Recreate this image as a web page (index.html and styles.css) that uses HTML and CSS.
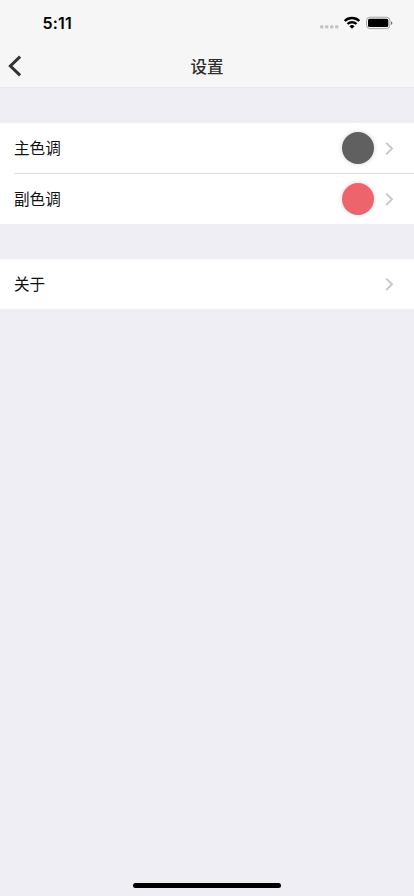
FILE: index.html
```html
<!DOCTYPE html>
<html lang="zh-CN">
<head>
<meta charset="utf-8">
<meta name="viewport" content="width=device-width, initial-scale=1">
<title>设置</title>
<link rel="stylesheet" href="styles.css">
</head>
<body>
<div class="screen">
  <header class="header">
    <div class="status">
      <span class="time">5:11</span>
      <svg class="status-icons" width="74" height="16" viewBox="0 0 74 16" aria-hidden="true">
        <g fill="#c4c4c4">
          <rect x="0" y="10.2" width="3.4" height="3.4" rx="1"/>
          <rect x="5" y="10.2" width="3.4" height="3.4" rx="1"/>
          <rect x="10" y="10.2" width="3.4" height="3.4" rx="1"/>
          <rect x="15" y="10.2" width="3.4" height="3.4" rx="1"/>
        </g>
        <g fill="none" stroke="#000" stroke-width="2.4">
          <path d="M24.7 6a10.5 10.5 0 0 1 14.6 0"/>
          <path d="M27.5 9a6.5 6.5 0 0 1 9 0"/>
        </g>
        <path d="M29.5 11.3a3.6 3.6 0 0 1 5 0L32 13.7z"/>
        <rect x="46.5" y="2.2" width="23.4" height="11.4" rx="3.4" fill="none" stroke="#a5a5a5"/>
        <rect x="48" y="3.8" width="20.3" height="8.3" rx="1.6"/>
        <path d="M71 6.2a2 2 0 0 1 0 3.8z" fill="#777"/>
      </svg>
    </div>
    <nav class="navbar">
      <svg class="back" width="14" height="22" viewBox="0 0 14 22" aria-hidden="true"><path d="M12.1 1.6L2.4 11l9.7 9.4" fill="none" stroke="#333" stroke-width="3"/></svg>
      <h1 class="title">设置</h1>
    </nav>
  </header>
  <main class="content">
    <section class="group">
      <div class="row">
        <span class="label">主色调</span>
        <span class="swatch swatch-primary"></span>
        <svg class="chevron" width="9" height="14" viewBox="0 0 9 14" aria-hidden="true"><path d="M1.2 1.8L7 7.6l-5.8 5.7"/></svg>
      </div>
      <div class="divider"></div>
      <div class="row">
        <span class="label">副色调</span>
        <span class="swatch swatch-accent"></span>
        <svg class="chevron" width="9" height="14" viewBox="0 0 9 14" aria-hidden="true"><path d="M1.2 1.6L7 7.3l-5.8 5.7"/></svg>
      </div>
    </section>
    <section class="group">
      <div class="row">
        <span class="label">关于</span>
        <svg class="chevron" width="9" height="14" viewBox="0 0 9 14" aria-hidden="true"><path d="M1.2 1.6L7 7.3l-5.8 5.7"/></svg>
      </div>
    </section>
  </main>
  <div class="home-indicator"></div>
</div>
</body>
</html>
```
FILE: styles.css
```css
* { box-sizing: border-box; }
body {
  margin: 0;
  font-family: Inter, "Noto Sans CJK SC", sans-serif;
  color: #111;
}
.screen {
  display: flex;
  flex-direction: column;
  height: 896px;
  background: #efeef4;
}
.header {
  height: 88px;
  background: #f6f6f6;
  border-bottom: 1px solid #e9e9eb;
}
.status {
  display: flex;
  justify-content: space-between;
  height: 44px;
  padding: 15px 20px 0 42.5px;
}
.time {
  font-size: 16px;
  font-weight: 600;
  line-height: 16px;
  letter-spacing: 0.15px;
  color: #000;
}
.navbar {
  display: grid;
  grid-template-columns: 40px 1fr 40px;
  align-items: center;
  height: 44px;
}
.back { margin-left: 8px; }
.title {
  margin: 0;
  padding-top: 2px;
  font-size: 16.5px;
  font-weight: 500;
  line-height: 24px;
  text-align: center;
  color: #2e2e2e;
}
.content {
  flex: 1;
  display: flex;
  flex-direction: column;
  gap: 35px;
  padding-top: 35px;
}
.group { background: #fff; }
.row {
  display: flex;
  align-items: center;
  height: 50px;
  padding: 0 20px 0 14px;
}
.label {
  flex: 1;
  padding-top: 2px;
  font-size: 15.6px;
  line-height: 24px;
}
.swatch {
  width: 32px;
  height: 32px;
  margin-right: 11.3px;
  border-radius: 50%;
  box-shadow: 0 0 5px rgba(0, 0, 0, 0.17);
}
.swatch-primary { background: #606060; }
.swatch-accent { background: #ee646c; }
.chevron {
  fill: none;
  stroke: #c7c7cc;
  stroke-width: 1.9;
}
.divider {
  height: 1px;
  margin-left: 14px;
  background: #dedee0;
}
.home-indicator {
  width: 148px;
  height: 5px;
  margin: 0 auto 8.5px;
  border-radius: 3px;
  background: #000;
}
```
